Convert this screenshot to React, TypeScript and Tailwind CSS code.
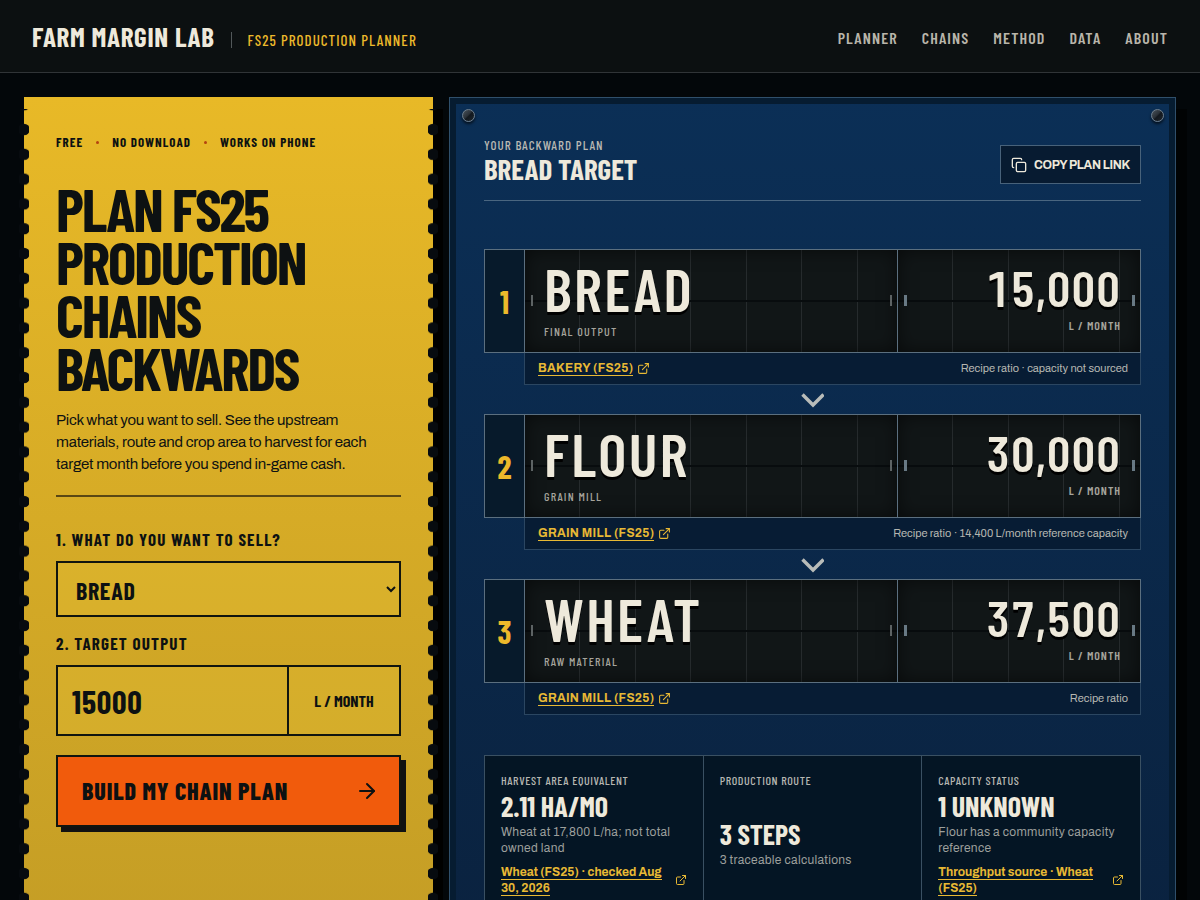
import { ArrowRight, Copy, ExternalLink } from "lucide-react";
import type { ReactNode } from "react";

const navItems = ["Planner", "Chains", "Method", "Data", "About"];

const steps = [
  { name: "Bread", role: "Final output", amount: "15,000", source: "Bakery (FS25)", note: "Recipe ratio · capacity not sourced" },
  { name: "Flour", role: "Grain mill", amount: "30,000", source: "Grain mill (FS25)", note: "Recipe ratio · 14,400 L/month reference capacity" },
  { name: "Wheat", role: "Raw material", amount: "37,500", source: "Grain mill (FS25)", note: "Recipe ratio" },
];

const metrics = [
  { label: "Harvest area equivalent", value: "2.11 ha/mo", detail: "Wheat at 17,800 L/ha; not total owned land", link: "Wheat (FS25) · checked Aug 30, 2026" },
  { label: "Production route", value: "3 steps", detail: "3 traceable calculations", link: "" },
  { label: "Capacity status", value: "1 unknown", detail: "Flour has a community capacity reference", link: "Throughput source · Wheat (FS25)" },
];

function Perforation({ id, className }: { id: string; className: string }) {
  return (
    <svg aria-hidden="true" className={`pointer-events-none absolute top-3 bottom-0 h-[calc(100%-12px)] w-[10px] ${className}`}>
      <defs>
        <pattern id={id} width="10" height="24.8" y="8.1" patternUnits="userSpaceOnUse">
          <circle cx="5" cy="12.4" r="5.8" fill="#070b0f" />
        </pattern>
      </defs>
      <rect width="10" height="100%" fill={`url(#${id})`} />
    </svg>
  );
}

function Screw({ className }: { className: string }) {
  return (
    <span
      aria-hidden="true"
      className={`absolute top-[11px] size-[13px] rounded-full border border-[#6f7f8d] bg-[linear-gradient(135deg,#4b545c_0%,#2a3138_45%,#12181e_55%,#20272e_100%)] shadow-[0_2px_3px_#000000aa] ${className}`}
    />
  );
}

function Board({ children, className, tick }: { children: ReactNode; className: string; tick: string }) {
  return (
    <div
      className={`relative flex flex-col bg-[#111617] bg-[linear-gradient(to_bottom,transparent_50px,#080c0e_50px,#080c0e_52px,transparent_52px),repeating-linear-gradient(to_right,transparent_0px,transparent_54px,#262b2d_54px,#262b2d_55px,transparent_55px,transparent_110px,#262b2d_110px,#262b2d_111px)] px-[19px] shadow-[inset_0_0_18px_#00000090] ${className}`}
    >
      <span aria-hidden="true" className={`absolute top-[45px] left-[6px] h-[11px] ${tick}`} />
      <span aria-hidden="true" className={`absolute top-[45px] right-[5px] h-[11px] ${tick}`} />
      {children}
    </div>
  );
}

function Step({ step, index }: { step: (typeof steps)[number]; index: number }) {
  return (
    <li className="flex flex-col">
      <div className="grid h-[104px] grid-cols-[39px_minmax(0,372fr)_minmax(0,242fr)] gap-px border border-[#5b6f7f] bg-[#5b6f7f]">
        <div className="flex items-center justify-center bg-[#071a2b] text-[32px] leading-8 font-bold text-[#ecb92b]">{index + 1}</div>
        <Board className="pt-2" tick="w-[2px] bg-[#5d6364]">
          <strong className="relative text-[60px] leading-[60px] font-semibold tracking-[0.04em] text-[#eee9db] uppercase [text-shadow:0_3px_0_#000000]">{step.name}</strong>
          <span className="relative mt-[5px] text-xs leading-4 font-medium tracking-widest text-[#a5a49c] uppercase">{step.role}</span>
        </Board>
        <Board className="items-end pt-[11px]" tick="w-[3px] bg-[#687984]">
          <strong className="relative text-[50px] leading-[52px] font-semibold tracking-[0.02em] text-[#eee9db] tabular-nums [text-shadow:0_3px_0_#000000]">{step.amount}</strong>
          <span className="relative mt-[4px] text-xs leading-4 font-semibold tracking-[0.08em] text-[#a5a49c] uppercase">L / month</span>
        </Board>
      </div>
      <div className="ml-10 flex h-8 items-center justify-between border border-t-0 border-[#2b4661] bg-[#071c34] px-3 pl-[13px] font-['Archivo','Liberation_Sans',sans-serif]">
        <a href="#source" className="flex items-center gap-1 text-xs leading-[14px] font-bold tracking-wide text-[#e8b934] uppercase">
          <span className="border-b border-[#e8b934]">{step.source}</span>
          <ExternalLink className="size-[13px]" strokeWidth={2} />
        </a>
        <span className="text-[11px] text-[#b5b6b1]">{step.note}</span>
      </div>
      {index < steps.length - 1 && (
        <div className="flex h-[29px] items-center justify-center">
          <svg aria-hidden="true" viewBox="0 0 24 16" className="h-4 w-6" fill="none" stroke="#b9bcb9" strokeWidth="3.4">
            <path d="M2.5 2.5 13 13 23.5 2.5" />
          </svg>
        </div>
      )}
    </li>
  );
}

export default function App() {
  return (
    <div className="min-h-screen bg-[#03070a] pb-6 font-['Barlow_Condensed','Roboto_Condensed',sans-serif] text-[#eee9db]">
      <header className="flex h-[73px] items-center justify-between border-b border-[#303437] bg-[#0c1011] px-8">
        <a href="#home" className="flex items-center gap-4 uppercase">
          <span className="pb-px text-[27px] leading-8 font-bold tracking-wide">Farm Margin Lab</span>
          <span className="mt-2 flex items-center gap-4">
            <span aria-hidden="true" className="h-4 w-px bg-[#52585a]" />
            <span className="text-[15px] leading-4 font-medium tracking-[0.07em] text-[#ecb92b]">FS25 production planner</span>
          </span>
        </a>
        <nav aria-label="Main" className="flex gap-6 pt-1">
          {navItems.map((item) => (
            <a key={item} href={`#${item.toLowerCase()}`} className="text-base leading-5 font-semibold tracking-[0.07em] text-[#b9b5aa] uppercase">
              {item}
            </a>
          ))}
        </nav>
      </header>

      <main className="grid grid-cols-[minmax(0,9fr)_minmax(0,16fr)] gap-4 px-6 pt-6">
        <section className="relative bg-linear-to-b from-[#e8b927] to-[#c49d25] px-8 pt-9 text-[#0d1112] shadow-[10px_12px_0_#000000]">
          <Perforation id="perforation-left" className="-left-[5px]" />
          <Perforation id="perforation-right" className="-right-[5px]" />

          <ul className="flex items-center gap-[13px] text-[13px] leading-[18px] font-bold tracking-[0.08em] uppercase">
            <li>Free</li>
            <li aria-hidden="true" className="size-[3px] rounded-full bg-[#b4430f]" />
            <li>No download</li>
            <li aria-hidden="true" className="size-[3px] rounded-full bg-[#b4430f]" />
            <li>Works on phone</li>
          </ul>

          <h1 className="mt-[31px] text-[60px] leading-[53px] font-bold tracking-[-0.035em] uppercase">
            Plan FS25
            <br />
            production
            <br />
            chains
            <br />
            backwards
          </h1>
          <p className="mt-[15px] max-w-[330px] font-['Archivo','Liberation_Sans',sans-serif] text-[15px] leading-[22px] tracking-[-0.015em]">
            Pick what you want to sell. See the upstream materials, route and crop area to harvest for each target month before you spend in-game cash.
          </p>

          <form onSubmit={(event) => event.preventDefault()} className="mt-5 border-t-2 border-[#5a4714] pt-[30px]">
            <label htmlFor="product" className="block text-[17px] leading-6 font-bold tracking-[0.07em] uppercase">
              1. What do you want to sell?
            </label>
            <select
              id="product"
              defaultValue="Bread"
              className="mt-[10px] block h-14 w-full border-2 border-[#11150f] bg-[#f5d040]/20 px-[14px] pt-[2px] text-2xl font-bold tracking-wide uppercase"
            >
              <option>Bread</option>
              <option>Flour</option>
              <option>Wheat</option>
            </select>

            <label htmlFor="target" className="mt-[14px] block text-[17px] leading-6 font-bold tracking-[0.07em] uppercase">
              2. Target output
            </label>
            <div className="mt-[10px] grid h-[71px] grid-cols-[minmax(0,1fr)_112px] border-2 border-[#11150f] bg-[#f5d040]/20">
              <input id="target" type="text" inputMode="numeric" defaultValue="15000" className="min-w-0 px-[14px] text-[32px] font-bold tracking-wide" />
              <span className="flex items-center justify-center border-l-2 border-[#11150f] text-base font-bold uppercase">L / month</span>
            </div>

            <button
              type="submit"
              className="mt-[19px] flex h-[72px] w-full items-center justify-between border-2 border-[#11150f] bg-[#f15b0c] pr-5 pl-6 text-2xl font-extrabold tracking-[0.035em] uppercase shadow-[5px_5px_0_#111111]"
            >
              Build my chain plan
              <ArrowRight className="size-6" strokeWidth={2} />
            </button>
          </form>
        </section>

        <section className="relative border border-[#2f4f6b] bg-linear-to-b from-[#0b2f56] to-[#0a223f] px-[34px] pt-[34px] pb-8 shadow-[inset_0_0_0_6px_#061c31,11px_12px_0_#010304]">
          <Screw className="left-3" />
          <Screw className="right-[11px]" />

          <div className="flex items-end justify-between border-b border-[#4a6680] pt-[5px] pb-4">
            <div className="uppercase">
              <p className="text-[13px] leading-4 font-medium tracking-[0.08em] text-[#b9b9b3]">Your backward plan</p>
              <h2 className="mt-px text-[29px] leading-[30px] font-bold">Bread target</h2>
            </div>
            <button
              type="button"
              className="flex h-[39px] items-center gap-[7px] border border-[#48627a] bg-[#071b31] px-[10px] font-['Archivo','Liberation_Sans',sans-serif] text-xs font-bold tracking-tight whitespace-nowrap uppercase"
            >
              <Copy className="size-4" strokeWidth={2} />
              Copy plan link
            </button>
          </div>

          <ol className="mt-12">
            {steps.map((step, index) => (
              <Step key={step.name} step={step} index={index} />
            ))}
          </ol>

          <div className="mt-10 grid grid-cols-3 gap-px border border-[#3a5062] bg-[#3a5062]">
            {metrics.map((metric) => (
              <article key={metric.label} className="flex flex-col bg-[#041524] px-4 pt-[15px] pb-4">
                <p className="text-xs leading-[18px] font-medium tracking-wider text-[#b5b6b1] uppercase">{metric.label}</p>
                <div className="flex flex-1 flex-col justify-center">
                  <strong className="pb-px text-[28px] leading-[34px] font-bold uppercase">{metric.value}</strong>
                  <span className="font-['Archivo','Liberation_Sans',sans-serif] text-xs leading-4 tracking-wide text-[#9c9f9c]">{metric.detail}</span>
                  {metric.link && (
                    <a
                      href="#source"
                      className="mt-2 flex items-center justify-between gap-3 font-['Archivo','Liberation_Sans',sans-serif] text-xs leading-4 font-bold text-[#e8b934]"
                    >
                      <span>
                        <span className="border-b border-[#e8b934]">{metric.link}</span>
                      </span>
                      <ExternalLink className="size-3 shrink-0" strokeWidth={2} />
                    </a>
                  )}
                </div>
              </article>
            ))}
          </div>
        </section>
      </main>
    </div>
  );
}
